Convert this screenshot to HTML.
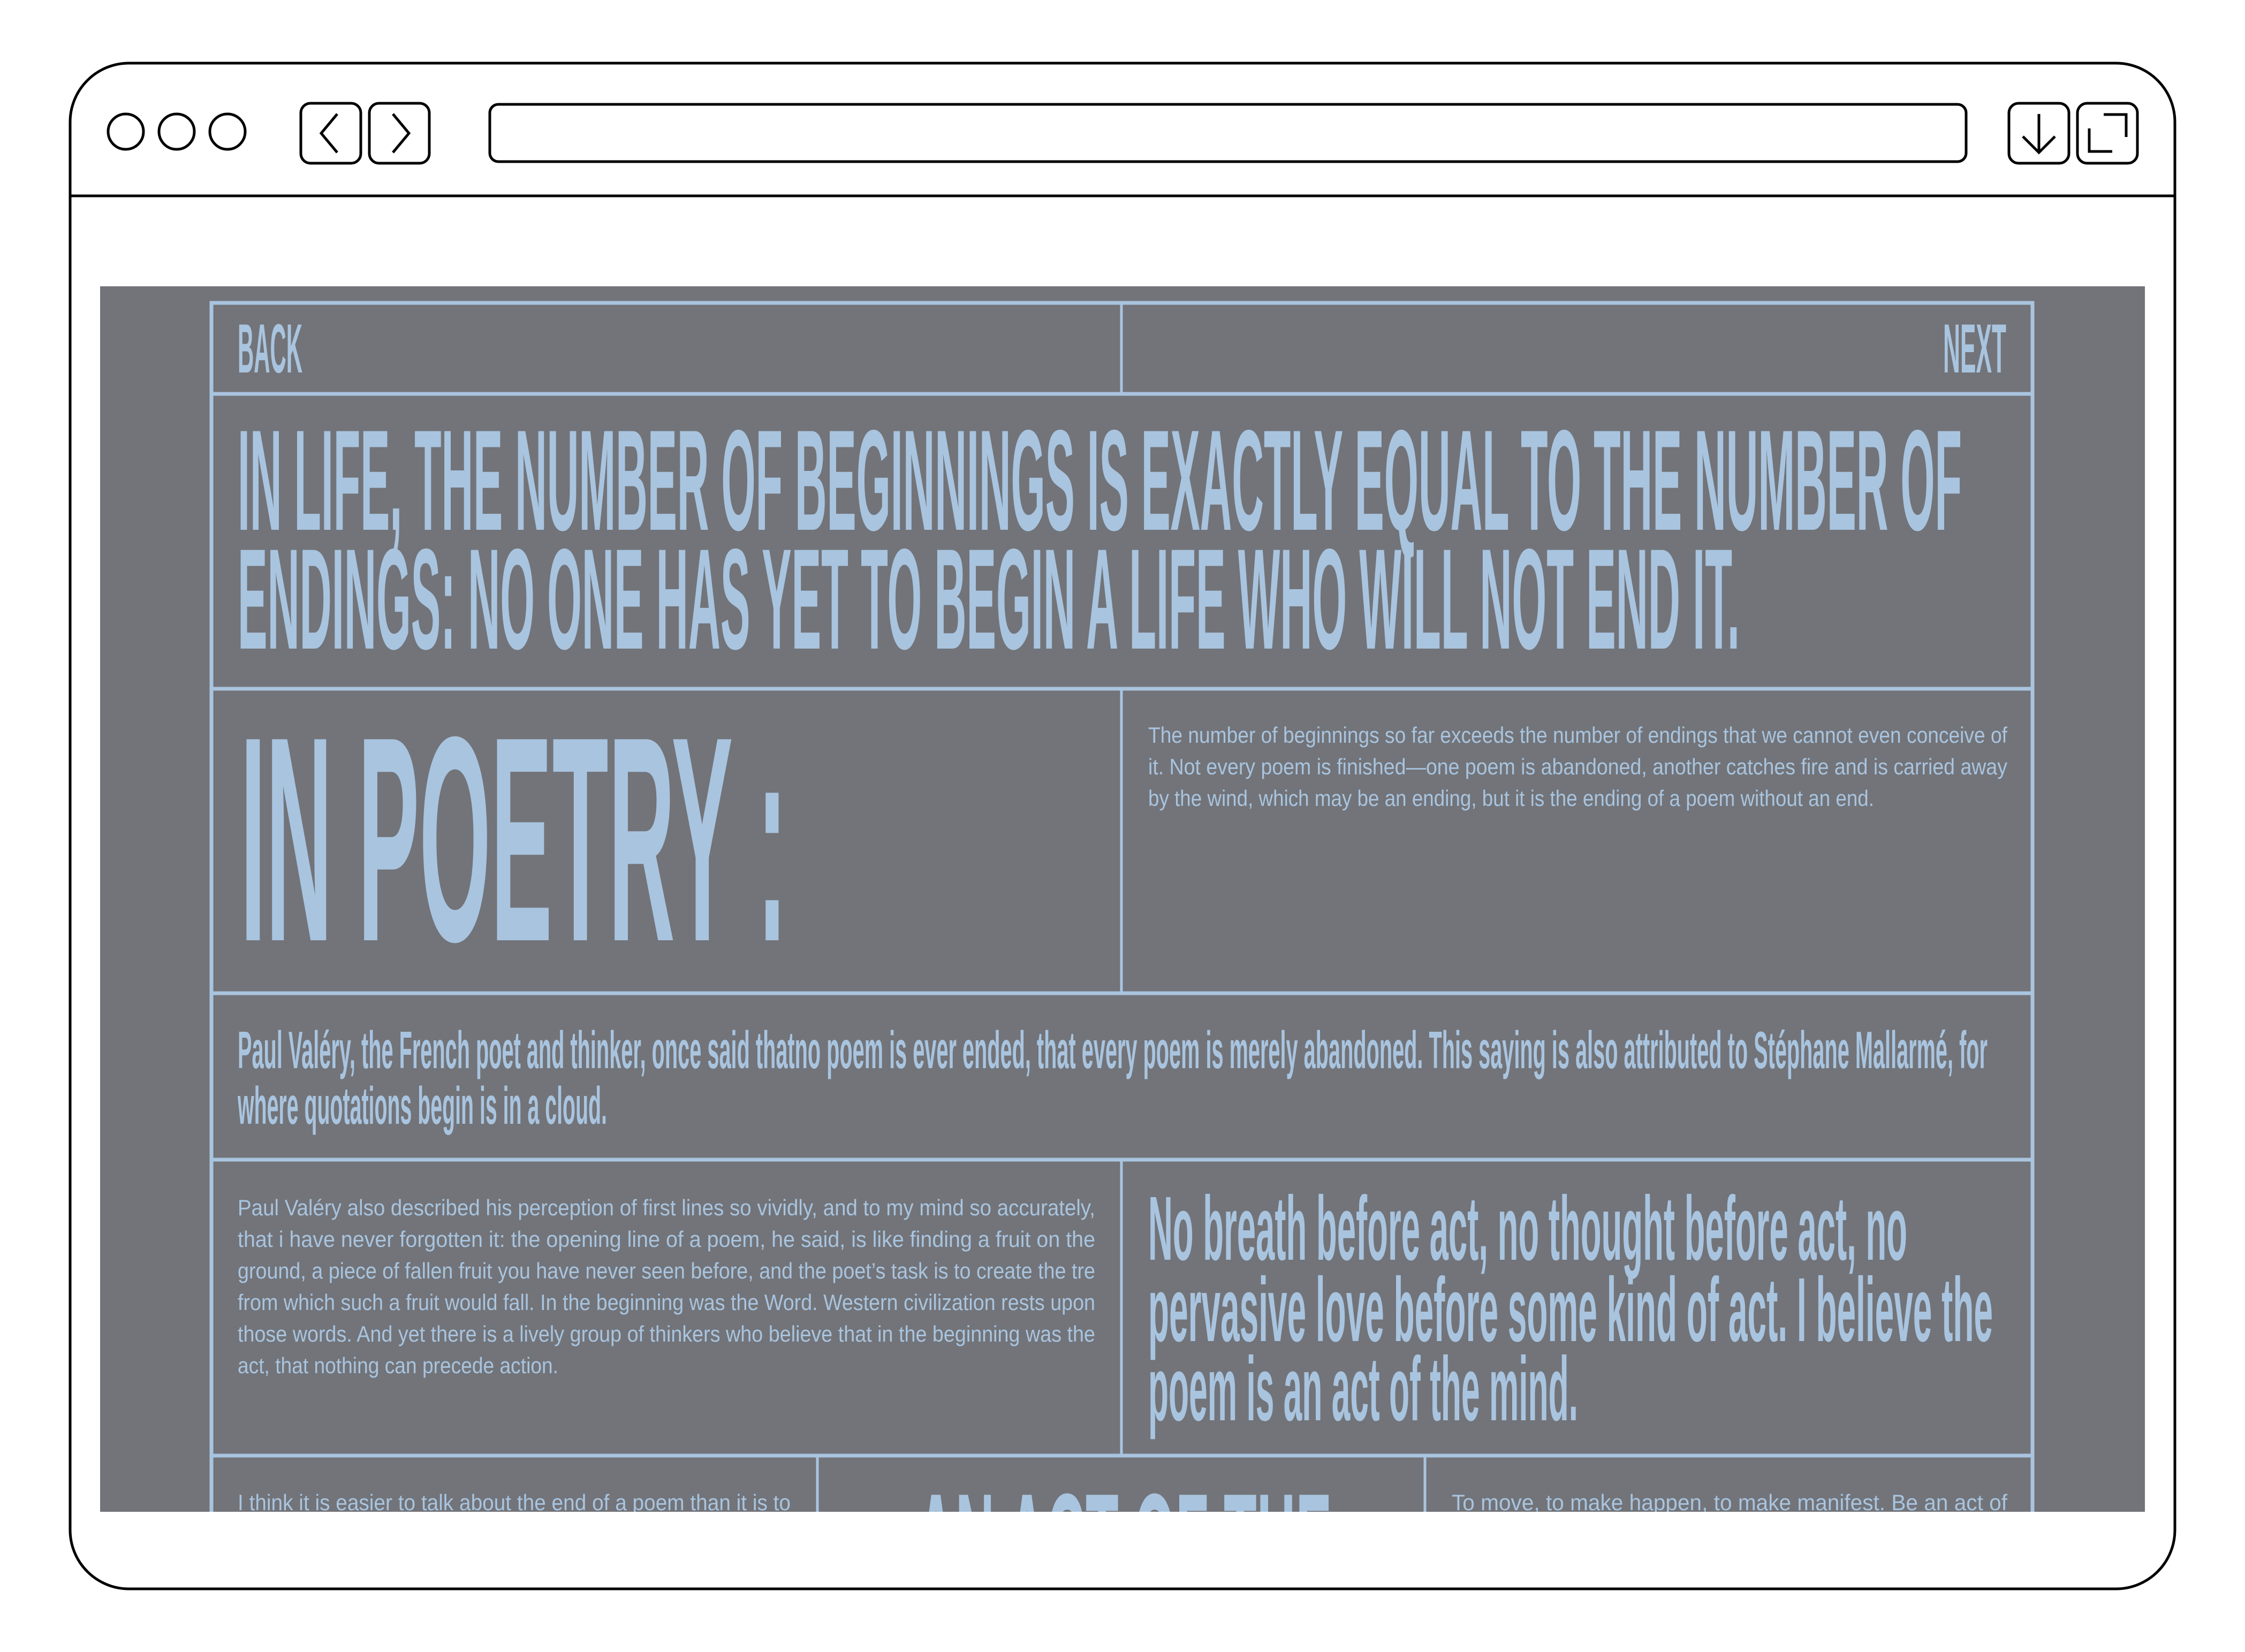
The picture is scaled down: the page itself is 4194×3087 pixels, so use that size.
<!DOCTYPE html>
<html><head><meta charset="utf-8"><style>
html,body{margin:0;padding:0;background:#fff;width:4194px;height:3087px;overflow:hidden}
svg{display:block}
.c{font-family:"Liberation Sans Narrow","Liberation Sans",sans-serif;font-weight:bold;fill:#a9c4df}
.r{font-family:"Liberation Sans Narrow","Liberation Sans",sans-serif;fill:#a9c4df}
</style></head><body>
<svg width="4194" height="3087" viewBox="0 0 4194 3087" xmlns="http://www.w3.org/2000/svg">
<defs><clipPath id="cp"><rect x="187" y="535" width="3820" height="2290"/></clipPath></defs>
<!-- browser frame -->
<rect x="131" y="118" width="3932" height="2851" rx="110" fill="#fff" stroke="#000" stroke-width="5"/>
<line x1="131" y1="366" x2="4063" y2="366" stroke="#000" stroke-width="5"/>
<circle cx="235" cy="246" r="33" fill="none" stroke="#000" stroke-width="5"/>
<circle cx="330" cy="246" r="33" fill="none" stroke="#000" stroke-width="5"/>
<circle cx="425" cy="246" r="33" fill="none" stroke="#000" stroke-width="5"/>
<rect x="562" y="193" width="112" height="112" rx="18" fill="none" stroke="#000" stroke-width="5"/>
<path d="M630 213 L600 249 L630 285" fill="none" stroke="#000" stroke-width="5"/>
<rect x="690" y="193" width="112" height="112" rx="18" fill="none" stroke="#000" stroke-width="5"/>
<path d="M734 213 L764 249 L734 285" fill="none" stroke="#000" stroke-width="5"/>
<rect x="915" y="195" width="2758" height="107" rx="16" fill="none" stroke="#000" stroke-width="5"/>
<rect x="3753" y="193" width="112" height="112" rx="18" fill="none" stroke="#000" stroke-width="5"/>
<path d="M3809 213 V285 M3779 255 L3809 285 L3839 255" fill="none" stroke="#000" stroke-width="5"/>
<rect x="3881" y="193" width="112" height="112" rx="18" fill="none" stroke="#000" stroke-width="5"/>
<path d="M3930 214 H3972 V256 M3903 240 V283 H3946" fill="none" stroke="#000" stroke-width="5"/>
<!-- content -->
<rect x="187" y="535" width="3820" height="2290" fill="#727479"/>
<g clip-path="url(#cp)">
<g stroke="#a9c4df" fill="none">
<rect x="395" y="566" width="3402" height="2400" stroke-width="7"/>
<line x1="393" y1="736" x2="3799" y2="736" stroke-width="7"/>
<line x1="393" y1="1287" x2="3799" y2="1287" stroke-width="7"/>
<line x1="393" y1="1856" x2="3799" y2="1856" stroke-width="7"/>
<line x1="393" y1="2167" x2="3799" y2="2167" stroke-width="7"/>
<line x1="393" y1="2720" x2="3799" y2="2720" stroke-width="7"/>
<line x1="2095" y1="564" x2="2095" y2="736" stroke-width="5"/>
<line x1="2095" y1="1287" x2="2095" y2="1856" stroke-width="5"/>
<line x1="2095" y1="2167" x2="2095" y2="2720" stroke-width="5"/>
<line x1="1527" y1="2720" x2="1527" y2="2830" stroke-width="5"/>
<line x1="2662" y1="2720" x2="2662" y2="2830" stroke-width="5"/>
</g>
<text class="c" x="444" y="696" font-size="130" textLength="121" lengthAdjust="spacingAndGlyphs">BACK</text>
<text class="c" x="3630" y="696" font-size="130" textLength="118" lengthAdjust="spacingAndGlyphs">NEXT</text>
<text class="c" x="444" y="990" font-size="268" textLength="3221" lengthAdjust="spacingAndGlyphs">IN LIFE, THE NUMBER OF BEGINNINGS IS EXACTLY EQUAL TO THE NUMBER OF</text>
<text class="c" x="444" y="1212" font-size="268" textLength="2806" lengthAdjust="spacingAndGlyphs">ENDINGS: NO ONE HAS YET TO BEGIN A LIFE WHO WILL NOT END IT.</text>
<text class="c" x="449" y="1757" font-size="546" textLength="1022" lengthAdjust="spacingAndGlyphs">IN POETRY :</text>
<text class="r" x="2145" y="1388" font-size="42" textLength="1605" lengthAdjust="spacingAndGlyphs">The number of beginnings so far exceeds the number of endings that we cannot even conceive of</text>
<text class="r" x="2145" y="1447" font-size="42" textLength="1605" lengthAdjust="spacingAndGlyphs">it. Not every poem is finished—one poem is abandoned, another catches fire and is carried away</text>
<text class="r" x="2145" y="1506" font-size="42" textLength="1356" lengthAdjust="spacingAndGlyphs">by the wind, which may be an ending, but it is the ending of a poem without an end.</text>
<text class="c" x="444" y="1996" font-size="98" textLength="3269" lengthAdjust="spacingAndGlyphs">Paul Valéry, the French poet and thinker, once said thatno poem is ever ended, that every poem is merely abandoned. This saying is also attributed to Stéphane Mallarmé, for</text>
<text class="c" x="444" y="2100" font-size="98" textLength="690" lengthAdjust="spacingAndGlyphs">where quotations begin is in a cloud.</text>
<text class="r" x="444" y="2271" font-size="42" textLength="1602" lengthAdjust="spacingAndGlyphs">Paul Valéry also described his perception of first lines so vividly, and to my mind so accurately,</text>
<text class="r" x="444" y="2330" font-size="42" textLength="1602" lengthAdjust="spacingAndGlyphs">that i have never forgotten it: the opening line of a poem, he said, is like finding a fruit on the</text>
<text class="r" x="444" y="2389" font-size="42" textLength="1602" lengthAdjust="spacingAndGlyphs">ground, a piece of fallen fruit you have never seen before, and the poet’s task is to create the tre</text>
<text class="r" x="444" y="2448" font-size="42" textLength="1602" lengthAdjust="spacingAndGlyphs">from which such a fruit would fall. In the beginning was the Word. Western civilization rests upon</text>
<text class="r" x="444" y="2507" font-size="42" textLength="1602" lengthAdjust="spacingAndGlyphs">those words. And yet there is a lively group of thinkers who believe that in the beginning was the</text>
<text class="r" x="444" y="2566" font-size="42" textLength="599" lengthAdjust="spacingAndGlyphs">act, that nothing can precede action.</text>
<text class="c" x="2145" y="2354" font-size="170" textLength="1418" lengthAdjust="spacingAndGlyphs">No breath before act, no thought before act, no</text>
<text class="c" x="2145" y="2506" font-size="170" textLength="1578" lengthAdjust="spacingAndGlyphs">pervasive love before some kind of act. I believe the</text>
<text class="c" x="2145" y="2654" font-size="170" textLength="803" lengthAdjust="spacingAndGlyphs">poem is an act of the mind.</text>
<text class="r" x="444" y="2822" font-size="42" textLength="1033" lengthAdjust="spacingAndGlyphs">I think it is easier to talk about the end of a poem than it is to</text>
<text class="c" x="1712" y="2979" font-size="270" textLength="776" lengthAdjust="spacingAndGlyphs">AN ACT OF THE</text>
<text class="r" x="2712" y="2822" font-size="42" textLength="1038" lengthAdjust="spacingAndGlyphs">To move, to make happen, to make manifest. Be an act of</text>
</g>
</svg>
</body></html>
